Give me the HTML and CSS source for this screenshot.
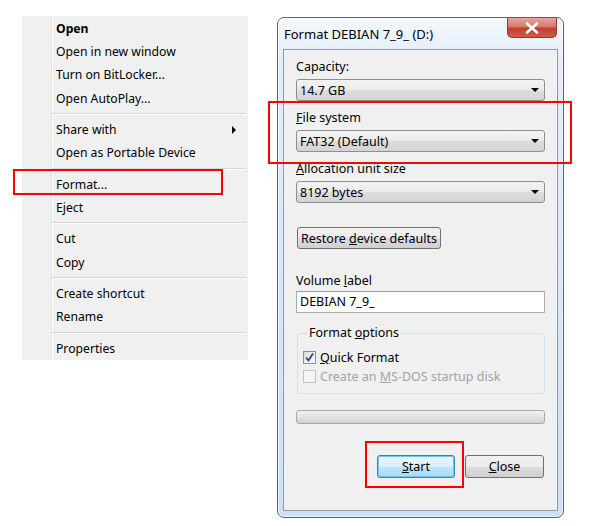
FILE: index.html
```html
<!DOCTYPE html>
<html>
<head>
<meta charset="utf-8">
<link rel="stylesheet" href="styles.css">
</head>
<body>
<div class="stage">
  <div class="menu">
    <div class="item bold">Open</div>
    <div class="item">Open in new window</div>
    <div class="item">Turn on BitLocker...</div>
    <div class="item">Open AutoPlay...</div>
    <div class="sep"></div>
    <div class="item sub">Share with<span class="arrow"></span></div>
    <div class="item">Open as Portable Device</div>
    <div class="sep"></div>
    <div class="item">Format...</div>
    <div class="item">Eject</div>
    <div class="sep"></div>
    <div class="item">Cut</div>
    <div class="item">Copy</div>
    <div class="sep"></div>
    <div class="item">Create shortcut</div>
    <div class="item">Rename</div>
    <div class="sep"></div>
    <div class="item">Properties</div>
  </div>

  <div class="dialog">
    <div class="titlebar">
      <span class="title">Format DEBIAN 7_9_ (D:)</span>
      <div class="close-x">
        <svg width="16" height="12" viewBox="0 0 16 12"><path d="M3 1.5 L13 10.5 M13 1.5 L3 10.5" stroke="#ffffff" stroke-width="2.6" stroke-linecap="round"/></svg>
      </div>
    </div>
    <div class="client">
      <div class="label">Capacity:</div>
      <div class="combo"><span>14.7 GB</span><span class="caret"></span></div>
      <div class="label"><u>F</u>ile system</div>
      <div class="combo"><span>FAT32 (Default)</span><span class="caret"></span></div>
      <div class="label"><u>A</u>llocation unit size</div>
      <div class="combo"><span>8192 bytes</span><span class="caret"></span></div>
      <div class="btn restore"><span>Restore <u>d</u>evice defaults</span></div>
      <div class="label vol">Volume <u>l</u>abel</div>
      <div class="textbox">DEBIAN 7_9_</div>
      <fieldset class="group">
        <legend>Format <u>o</u>ptions</legend>
        <div class="check-row">
          <span class="checkbox checked">
            <svg width="11" height="11" viewBox="0 0 11 11"><path d="M2 5.5 L4.5 8.5 L9 1.5" fill="none" stroke="#2b4a8f" stroke-width="1.8"/></svg>
          </span>
          <span><u>Q</u>uick Format</span>
        </div>
        <div class="check-row disabled">
          <span class="checkbox"></span>
          <span>Create an <u>M</u>S-DOS startup disk</span>
        </div>
      </fieldset>
      <div class="progress"></div>
      <div class="buttons">
        <div class="btn default"><span><u>S</u>tart</span></div>
        <div class="btn"><span><u>C</u>lose</span></div>
      </div>
    </div>
  </div>

  <div class="mark mark-format"></div>
  <div class="mark mark-fs"></div>
  <div class="mark mark-start"></div>
</div>
</body>
</html>
```

FILE: styles.css
```css
html, body {
  margin: 0;
  padding: 0;
  background: #ffffff;
}
.stage {
  position: relative;
  width: 590px;
  height: 526px;
  box-sizing: border-box;
  padding: 16px 0 0 22px;
  display: flex;
  align-items: flex-start;
  gap: 29px;
  font-family: "Noto Sans", "Open Sans", sans-serif;
  font-size: 12.5px;
  color: #000;
  overflow: hidden;
}

/* context menu */
.menu {
  width: 226px;
  height: 344px;
  box-sizing: border-box;
  padding-top: 0.7px;
  font-size: 12.2px;
  background-color: #f0f0f0;
  background-image: linear-gradient(to right, transparent 29px, #e2e3e3 29px, #e2e3e3 30px, #ffffff 30px, #ffffff 31px, transparent 31px);
  display: flex;
  flex-direction: column;
}
.item {
  height: 23.33px;
  line-height: 23.33px;
  padding-left: 34px;
  white-space: nowrap;
  position: relative;
}
.item.bold { font-weight: bold; }
.sep {
  height: 8px;
  margin-left: 30px;
  margin-right: 2px;
  background: linear-gradient(to bottom, transparent 3px, #d7d7d7 3px, #d7d7d7 4px, #ffffff 4px, #ffffff 5px, transparent 5px);
}
.arrow {
  position: absolute;
  right: 12px;
  top: 8px;
  width: 0;
  height: 0;
  border-top: 4px solid transparent;
  border-bottom: 4px solid transparent;
  border-left: 4px solid #000;
}

/* dialog */
.dialog {
  width: 287px;
  height: 501px;
  margin-top: 1px;
  box-sizing: border-box;
  border: 1px solid #5b5f66;
  border-radius: 7px;
  background: linear-gradient(to bottom, #f4f8fd 0px, #e3edf9 40px, #cddff3 100%);
  padding: 0 5px 6px 5px;
  display: flex;
  flex-direction: column;
  position: relative;
  box-shadow: inset 0 0 0 1px rgba(255,255,255,0.6);
}
.titlebar {
  height: 31px;
  display: flex;
  align-items: center;
  position: relative;
}
.title {
  font-size: 13px;
  padding-left: 1px;
  color: #000;
}
.close-x {
  position: absolute;
  top: 0;
  right: 1px;
  width: 50px;
  height: 20px;
  box-sizing: border-box;
  border: 1px solid #8d3b32;
  border-top: none;
  border-radius: 0 0 5px 5px;
  background: linear-gradient(to bottom, #e7a59c 0%, #d7786b 45%, #c2402f 55%, #cf5a47 100%);
  display: flex;
  align-items: center;
  justify-content: center;
}
.client {
  flex: 1;
  border: 1px solid #8d9bab;
  background: #f0f0f0;
  padding: 9px 12px 0 12px;
  display: flex;
  flex-direction: column;
}
.label {
  height: 16px;
  line-height: 16px;
  margin-bottom: 4px;
  white-space: nowrap;
}
.combo {
  height: 22px;
  box-sizing: border-box;
  border: 1px solid #8f8f8f;
  border-radius: 3px;
  background: linear-gradient(to bottom, #f3f3f3 0%, #ebebeb 50%, #dddddd 51%, #d3d3d3 100%);
  display: flex;
  align-items: center;
  justify-content: space-between;
  padding: 0 5px 0 3px;
  margin-bottom: 9px;
}
.caret {
  width: 0;
  height: 0;
  border-left: 4px solid transparent;
  border-right: 4px solid transparent;
  border-top: 4px solid #000;
}
.btn {
  height: 23px;
  box-sizing: border-box;
  border: 1px solid #707070;
  border-radius: 3px;
  background: linear-gradient(to bottom, #f2f2f2 0%, #ebebeb 50%, #dddddd 51%, #cfcfcf 100%);
  display: flex;
  align-items: center;
  justify-content: center;
  white-space: nowrap;
}
.restore {
  width: 144px;
  height: 22px;
  margin-left: 1px;
  margin-top: 15px;
}
.label.vol {
  margin-top: 24px;
  margin-bottom: 2px;
}
.textbox {
  height: 22px;
  box-sizing: border-box;
  border: 1px solid #abadb3;
  border-top-color: #9a9da5;
  background: #fff;
  padding-left: 3px;
  line-height: 20px;
}
.group {
  margin: 12px 0 0 1px;
  padding: 7px 0 0 5px;
  height: 69px;
  box-sizing: border-box;
  border: 1px solid #d5dfe5;
  border-radius: 3px;
  min-width: 0;
}
.group legend {
  padding: 0 2px;
  margin-left: 4px;
  line-height: 16px;
  height: 16px;
}
.check-row {
  display: flex;
  align-items: center;
  gap: 4px;
  height: 19px;
}
.checkbox {
  width: 13px;
  height: 13px;
  box-sizing: border-box;
  border: 1px solid #8e8f8f;
  background: linear-gradient(135deg, #dcdcdc 0%, #fdfdfd 100%);
  display: flex;
  align-items: center;
  justify-content: center;
}
.check-row.disabled { color: #a3a3a3; }
.check-row.disabled .checkbox {
  border-color: #c2c2c2;
  background: #f4f4f4;
}
.progress {
  margin-top: 16px;
  height: 14px;
  box-sizing: border-box;
  border: 1px solid #a9a9a9;
  border-radius: 3px;
  background: linear-gradient(to bottom, #f0f0f0 0%, #e3e3e3 50%, #d2d2d2 100%);
}
.buttons {
  margin-top: 31px;
  display: flex;
  justify-content: flex-end;
  gap: 10px;
  padding-right: 1px;
}
.buttons .btn { width: 79px; }
.btn.default {
  width: 78px;
  border-color: #3c7fb1;
  background: linear-gradient(to bottom, #eaf6fd 0%, #d9f0fc 50%, #bee6fd 51%, #a7d9f5 100%);
  box-shadow: inset 0 0 0 1px #6fc6ee;
}

/* red annotation boxes */
.mark {
  position: absolute;
  border: 2px solid #ff0000;
  box-sizing: border-box;
}
.mark-format { left: 13px; top: 169px; width: 210px; height: 26px; }
.mark-fs { left: 268px; top: 101px; width: 304px; height: 63px; }
.mark-start { left: 365px; top: 441px; width: 99px; height: 47px; }
```
